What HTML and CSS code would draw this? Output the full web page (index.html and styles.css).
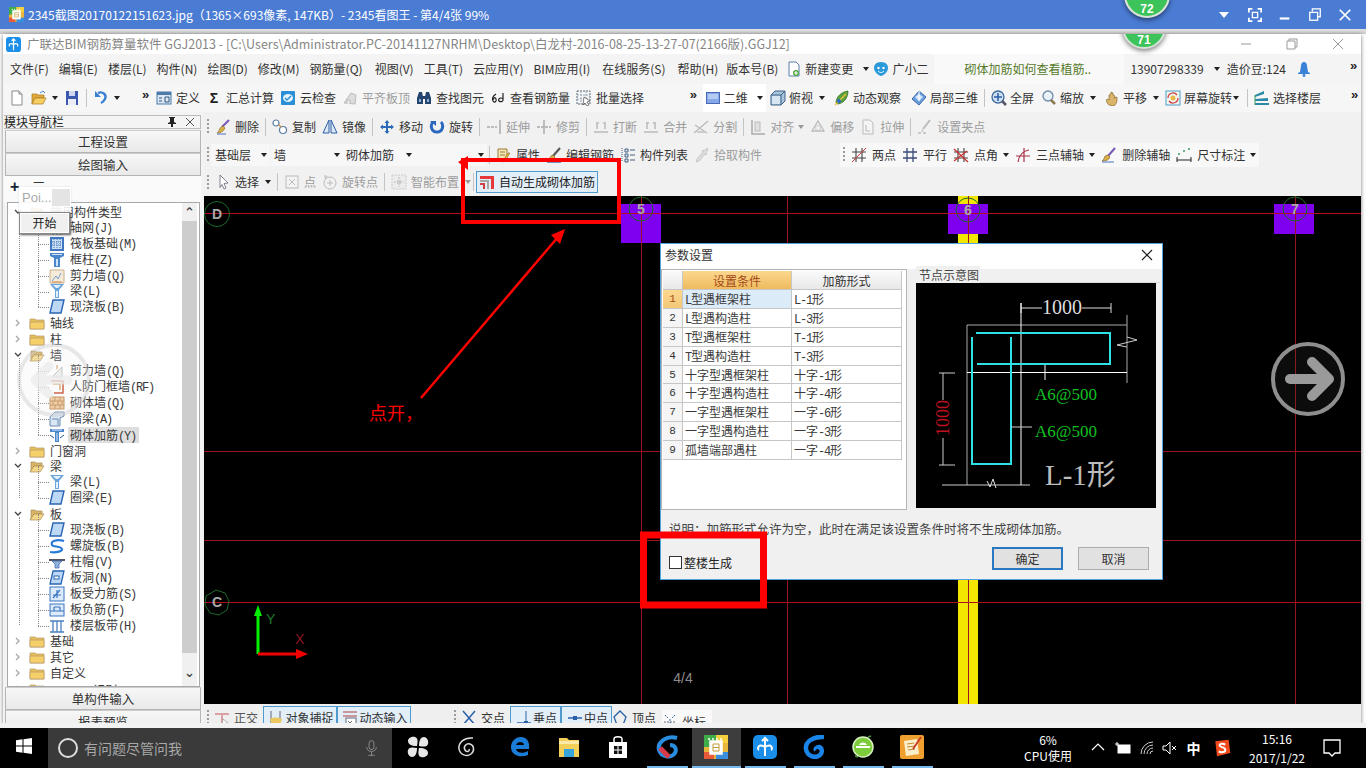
FILE: index.html
```html
<!DOCTYPE html>
<html lang="zh-CN">
<head>
<meta charset="utf-8">
<title>2345看图王</title>
<link rel="stylesheet" href="styles.css">
</head>
<body>
<svg class="sprite" xmlns="http://www.w3.org/2000/svg">
<symbol id="doc" viewBox="0 0 16 16"><path d="M3 1h7l3 3v11H3z" fill="#fff" stroke="#8a8a8a"/><path d="M10 1v3h3" fill="#ddd" stroke="#8a8a8a"/></symbol>
<symbol id="open" viewBox="0 0 16 16"><path d="M1 4h5l1 1h6v3H4l-3 6z" fill="#e0a93a" stroke="#a87a20" stroke-width=".7"/><path d="M1 14l3-6h11l-3 6z" fill="#f6cd63" stroke="#a87a20" stroke-width=".7"/><path d="M9 3l3-2 2 2" fill="none" stroke="#4a8ad0"/></symbol>
<symbol id="save" viewBox="0 0 16 16"><rect x="2" y="1" width="12" height="14" fill="#3b58b0"/><rect x="5" y="1" width="6" height="5" fill="#cfd9ee"/><rect x="4" y="9" width="8" height="6" fill="#e8edf6"/></symbol>
<symbol id="undo" viewBox="0 0 16 16"><path d="M5 3c5-2 9 2 7 6-1 2-2 3-4 4" fill="none" stroke="#3a80d2" stroke-width="2.4"/><path d="M2 1v6h6z" fill="#3a80d2"/></symbol>
<symbol id="def" viewBox="0 0 16 16"><rect x="1" y="2" width="14" height="12" fill="#dbe7f2" stroke="#4b7aa8"/><rect x="1" y="2" width="14" height="3" fill="#4b7aa8"/><path d="M3 8h3M3 11h3M9 7h4v5H9z" stroke="#33567c" fill="none"/></symbol>
<symbol id="cloud" viewBox="0 0 16 16"><rect x="1" y="1" width="14" height="14" rx="1" fill="#2b8fd8"/><ellipse cx="8" cy="8" rx="5" ry="4" fill="#e6f3fc"/><path d="M5 8l2 2 4-4" fill="none" stroke="#2b8fd8" stroke-width="1.5"/></symbol>
<symbol id="flat" viewBox="0 0 16 16"><path d="M2 13L9 3l5 2-1 9z" fill="#ddd" stroke="#bbb"/><path d="M5 14v-4h3v4" fill="#eee" stroke="#bbb"/></symbol>
<symbol id="find" viewBox="0 0 16 16"><path d="M3 2h3l1 5v7H1V8zM10 2h3l2 6v6H9V7z" fill="#24456e"/><rect x="6" y="6" width="4" height="3" fill="#24456e"/><rect x="3" y="9" width="2" height="3" fill="#8fb2d6"/><rect x="11" y="9" width="2" height="3" fill="#8fb2d6"/></symbol>
<symbol id="rebar" viewBox="0 0 16 16"><path d="M6 4C3 6 2 9 3 11s4 1 3-2-3 0-3 1M13 3v7c0 2-3 2-4 1s0-3 2-3 2 1 2 1" fill="none" stroke="#222" stroke-width="1.2"/></symbol>
<symbol id="batch" viewBox="0 0 16 16"><rect x="1" y="1" width="13" height="13" fill="none" stroke="#567" stroke-dasharray="2 1"/><path d="M1 5h13M1 9h13M5 1v13M10 1v13" stroke="#9ab" stroke-dasharray="2 1"/><path d="M8 7l6 4-3 1 2 3-2 1-2-3-2 2z" fill="#fff" stroke="#333" stroke-width=".6"/></symbol>
<symbol id="two" viewBox="0 0 16 16"><rect x="1.500" y="2.500" width="13" height="11" fill="#86a8e8" stroke="#4a6ab8"/><rect x="3" y="4" width="10" height="5" fill="#b4cbf2"/></symbol>
<symbol id="top" viewBox="0 0 16 16"><path d="M1 5l4-4h10v10l-4 4H1z" fill="#a9c5de" stroke="#3f6285"/><path d="M1 5h10v10M11 5l4-4" fill="none" stroke="#3f6285"/><rect x="2" y="6" width="8" height="8" fill="#d7e6f2"/></symbol>
<symbol id="orbit" viewBox="0 0 16 16"><path d="M2 13C2 7 7 2 14 1c0 7-4 12-10 13z" fill="#5aa13a" stroke="#2e6a1e" stroke-width=".7"/><path d="M1 15L12 4" stroke="#e8c23b" stroke-width="1.5"/><circle cx="5" cy="11" r="2" fill="#2b6ad0"/></symbol>
<symbol id="local" viewBox="0 0 16 16"><path d="M8 1l7 6-7 8-7-6z" fill="#6b9fdc" stroke="#3a6aa8"/><path d="M4 7l4-3 4 3-4 4z" fill="#d9e8f8"/><path d="M8 1v10" stroke="#fff"/></symbol>
<symbol id="full" viewBox="0 0 16 16"><circle cx="7" cy="7" r="6" fill="#cfe0f2" stroke="#3f6b9c" stroke-width="1.3"/><path d="M7 3v8M3 7h8" stroke="#2a5fa8" stroke-width="1.500"/><path d="M11 11l4 4" stroke="#556" stroke-width="2.500"/></symbol>
<symbol id="zoom" viewBox="0 0 16 16"><circle cx="7" cy="6" r="5" fill="#e8f0f8" stroke="#6f8aa6" stroke-width="1.300"/><path d="M10 10l4 4" stroke="#8a7a50" stroke-width="2.500"/><path d="M4 5a3 3 0 0 1 3-2" stroke="#fff" fill="none"/></symbol>
<symbol id="pan" viewBox="0 0 16 16"><path d="M5 15c-3-3-3-5-2-6l2 1V5l2-1V2l2 1v2l2 1-1 2 3-1v3c0 3-2 5-3 6z" fill="#d9b46a" stroke="#8a6a2a" stroke-width=".7"/></symbol>
<symbol id="rot" viewBox="0 0 16 16"><rect x="1" y="1" width="14" height="14" fill="#f2f6ee" stroke="#4aa0c8"/><path d="M3 8a5 5 0 0 1 9-3M13 8a5 5 0 0 1-9 3" fill="none" stroke="#d04040" stroke-width="1.300"/><circle cx="8" cy="8" r="2.500" fill="#e8b84a"/></symbol>
<symbol id="floor" viewBox="0 0 16 16"><path d="M1 5l9-4v3L1 7zM1 9l13-1v3H1zM1 13h14v2H1z" fill="#2a8aa6"/><path d="M1 5v10" stroke="#3a9a5a"/></symbol>
<symbol id="newch" viewBox="0 0 16 16"><path d="M3 1h7l3 3v11H3z" fill="#fff" stroke="#5a7fb0"/><circle cx="10" cy="12" r="3" fill="#4aa83a"/><path d="M8 12h4M10 10v4" stroke="#fff"/></symbol>
<symbol id="mascot" viewBox="0 0 16 16"><path d="M8 1c5 0 7 3 7 6s-3 7-7 8c-4-1-7-5-7-8s2-6 7-6z" fill="#2b9ad8"/><circle cx="5.500" cy="7" r="1.200" fill="#fff"/><circle cx="10.500" cy="7" r="1.200" fill="#fff"/><path d="M5 10c2 2 4 2 6 0" stroke="#fff" fill="none"/></symbol>
<symbol id="bell" viewBox="0 0 16 16"><path d="M8 1c2 0 3 2 3 4l1 6 2 1v1H2v-1l2-1 1-6c0-2 1-4 3-4z" fill="#3a82d8"/><circle cx="8" cy="14.500" r="1.400" fill="#3a82d8"/></symbol>
<symbol id="del" viewBox="0 0 16 16"><path d="M14 1L7 8" stroke="#7a5ab8" stroke-width="2.200"/><path d="M8 7l2 2c-1 3-4 5-8 5 2-1 2-3 3-5z" fill="#d8b04a" stroke="#8a6a2a" stroke-width=".6"/><path d="M2 15h9" stroke="#4a70c0"/></symbol>
<symbol id="copy" viewBox="0 0 16 16"><circle cx="4" cy="4" r="3" fill="#fff" stroke="#5a7aa0" stroke-width="1.200"/><circle cx="11" cy="11" r="3.500" fill="#fff" stroke="#5a7aa0" stroke-width="1.200"/><path d="M7 6l2 2" stroke="#e08a2a" stroke-width="1.300"/></symbol>
<symbol id="mirror" viewBox="0 0 16 16"><path d="M7 1L1 14h6zM9 1l6 13H9z" fill="#dbe8f6" stroke="#2d5ea8"/></symbol>
<symbol id="move" viewBox="0 0 16 16"><path d="M8 1l2.500 3H9v3h3V5.500L15 8l-3 2.500V9H9v3h1.500L8 15l-2.500-3H7V9H4v1.500L1 8l3-2.500V7h3V4H5.500z" fill="#2a6ab8"/></symbol>
<symbol id="rotate" viewBox="0 0 16 16"><path d="M4 3C1 6 2 13 8 13s7-7 4-10" fill="none" stroke="#2a68c0" stroke-width="3"/><path d="M1 2h6v5z" fill="#2a68c0"/></symbol>
<symbol id="extend" viewBox="0 0 16 16"><path d="M1 8h10" stroke="#bbb" stroke-width="2" stroke-dasharray="3 1"/><path d="M14 1v14" stroke="#aaa" stroke-width="1.500"/></symbol>
<symbol id="trim" viewBox="0 0 16 16"><path d="M1 8h14" stroke="#bbb" stroke-width="2" stroke-dasharray="3 1"/><path d="M8 1v14" stroke="#aaa" stroke-width="1.500"/></symbol>
<symbol id="brk" viewBox="0 0 16 16"><path d="M1 13h14M3 4h3M10 4h3M4 4v6M12 4v6" stroke="#bbb" stroke-width="1.500"/></symbol>
<symbol id="split" viewBox="0 0 16 16"><path d="M1 14L15 2M2 6l12 8" stroke="#bbb" stroke-width="1.400"/><path d="M4 12h8v2H4z" fill="#ccc"/></symbol>
<symbol id="align" viewBox="0 0 16 16"><path d="M2 1v14h13" fill="none" stroke="#aaa" stroke-width="1.500"/><rect x="5" y="3" width="5" height="9" fill="#e0e0e0" stroke="#bbb"/></symbol>
<symbol id="offset" viewBox="0 0 16 16"><path d="M8 2l6 10H2z" fill="none" stroke="#bbb" stroke-width="1.300"/><circle cx="8" cy="9" r="2.500" fill="none" stroke="#ccc"/></symbol>
<symbol id="stretch" viewBox="0 0 16 16"><path d="M3 1h7l3 3v11H3z" fill="#f4f4f4" stroke="#bbb"/><path d="M6 6v6h4" stroke="#bbb" fill="none"/></symbol>
<symbol id="gripset" viewBox="0 0 16 16"><path d="M13 1L6 10" stroke="#bbb" stroke-width="2"/><path d="M1 14h3M6 14h3" stroke="#bbb" stroke-width="1.500"/><path d="M5 10l2 2-3 1z" fill="#ccc"/></symbol>
<symbol id="prop" viewBox="0 0 16 16"><path d="M2 2h9v12H2z" fill="#f4e6b8" stroke="#9a7a30"/><path d="M4 5h5M4 8h5" stroke="#9a7a30"/><path d="M14 6l-5 8-2 1 1-3 4-6z" fill="#e6b84a" stroke="#8a6a2a" stroke-width=".6"/></symbol>
<symbol id="edit" viewBox="0 0 16 16"><path d="M14 1L7 9" stroke="#555" stroke-width="2"/><path d="M7 8l2 2c-1 2-3 3-7 3 2-1 2-3 3-4z" fill="#d8b04a" stroke="#7a5a20" stroke-width=".6"/><path d="M1 15h14" stroke="#2a5fa8" stroke-width="1.300"/></symbol>
<symbol id="list" viewBox="0 0 16 16"><path d="M5 2h3v3H5zM5 7h3v3H5zM5 12h3v3H5zM10 3h5M10 8h5M10 13h5" fill="#dfe8f2" stroke="#44607e"/><path d="M2 1v14" stroke="#44607e" stroke-dasharray="1 1"/></symbol>
<symbol id="pick" viewBox="0 0 16 16"><path d="M14 2l-1-1-3 3-1-1-1 1 1 1-6 7-1 3 3-1 6-7 1 1 1-1-1-1z" fill="#ddd" stroke="#bbb" stroke-width=".7"/></symbol>
<symbol id="p2" viewBox="0 0 16 16"><path d="M5 1v14M11 1v14M1 5h14M1 11h14" stroke="#444" stroke-width="1.100"/><path d="M1 15L15 1" stroke="#c83a3a"/></symbol>
<symbol id="par" viewBox="0 0 16 16"><path d="M5 1v14M11 1v14M1 5h14M1 11h14" stroke="#3a4a7a" stroke-width="1.300"/></symbol>
<symbol id="pang" viewBox="0 0 16 16"><path d="M5 1v14M11 1v14M1 5h14M1 11h14" stroke="#444" stroke-width="1.100"/><path d="M1 2l14 13M1 14L14 4" stroke="#d03030" stroke-width="1.200"/></symbol>
<symbol id="p3" viewBox="0 0 16 16"><path d="M3 15C4 8 8 4 14 3M9 1v14M1 9h14" fill="none" stroke="#a83048" stroke-width="1.200"/></symbol>
<symbol id="deax" viewBox="0 0 16 16"><path d="M14 1L7 9" stroke="#7a5ab8" stroke-width="2"/><path d="M7 8l2 2c-1 3-4 4-8 4 2-1 2-3 3-5z" fill="#d8b04a" stroke="#7a5a20" stroke-width=".6"/><path d="M1 15h12" stroke="#4a70c0"/></symbol>
<symbol id="dim" viewBox="0 0 16 16"><path d="M1 10v5M15 10v5M1 13h14" stroke="#222"/><path d="M2 7h2M7 4h2M12 2h2" stroke="#3a9a5a" stroke-width="1.500"/></symbol>
<symbol id="cursor" viewBox="0 0 16 16"><path d="M5 1l8 8-4 .5 2 4.500-2 1-2-4.500-2 3z" fill="#fff" stroke="#667" stroke-width=".8"/></symbol>
<symbol id="pt" viewBox="0 0 16 16"><rect x="2" y="2" width="12" height="12" fill="#f3f3f3" stroke="#bbb"/><path d="M5 5l6 6M11 5l-6 6" stroke="#bbb"/></symbol>
<symbol id="rotpt" viewBox="0 0 16 16"><circle cx="8" cy="9" r="6" fill="none" stroke="#bbb"/><path d="M8 6v6M5 9h6" stroke="#bbb"/><path d="M2 1l1 5 3-4z" fill="#ccc"/></symbol>
<symbol id="smart" viewBox="0 0 16 16"><rect x="1" y="1" width="14" height="14" fill="#ececec" stroke="#ccc" stroke-dasharray="2 1"/><path d="M8 3v10M3 8h10" stroke="#bbb" stroke-dasharray="2 1"/><rect x="6" y="6" width="4" height="4" fill="#ccc"/></symbol>
<symbol id="auto" viewBox="0 0 16 16"><path d="M1 2h14v13h-3V5H1z" fill="#e63a3a"/><path d="M1 6h9v9H8V8H1z" fill="#a8a8a8"/><path d="M1 9h5v6H4v-4H1z" fill="#d04040"/></symbol>
<symbol id="ortho" viewBox="0 0 16 16"><path d="M1 4h14M8 4v10" stroke="#d8a0a0" stroke-width="2"/><path d="M9 9l5 4-3 .5 1 2-1 .500-1-2-2 1z" fill="#fff" stroke="#888" stroke-width=".6"/></symbol>
<symbol id="snap" viewBox="0 0 16 16"><path d="M3 1v14M12 1v8" stroke="#667"/><path d="M2 9c3-2 8-2 12 0l-2 6H4z" fill="#ecc860"/></symbol>
<symbol id="dyn" viewBox="0 0 16 16"><path d="M1 2h14M1 6h14" stroke="#b04040"/><rect x="4" y="8" width="10" height="7" fill="#fff" stroke="#667"/><path d="M6 11l2 2 2-2" fill="none" stroke="#667"/></symbol>
<symbol id="cross" viewBox="0 0 16 16"><path d="M2 1l12 14M14 1L2 15" stroke="#2a60a8" stroke-width="1.500"/></symbol>
<symbol id="perp" viewBox="0 0 16 16"><path d="M1 13h14" stroke="#2a60a8" stroke-width="1.500"/><path d="M10 1v12" stroke="#2a60a8"/><rect x="8" y="11" width="4" height="4" fill="#2a60a8"/></symbol>
<symbol id="mid" viewBox="0 0 16 16"><path d="M1 8h14" stroke="#2a60a8" stroke-width="1.500"/><rect x="6" y="6" width="4" height="4" fill="#2a60a8"/></symbol>
<symbol id="vtx" viewBox="0 0 16 16"><path d="M8 1l6 6-3 8H5L2 7z" fill="none" stroke="#2a60a8" stroke-width="1.300"/></symbol>
<symbol id="coord" viewBox="0 0 16 16"><path d="M3 1l3 3M13 1l-3 3M8 5v10" stroke="#2a60a8" stroke-dasharray="2 1"/><path d="M2 8h12" stroke="#667" stroke-dasharray="2 1"/></symbol>
<symbol id="chev" viewBox="0 0 8 8"><path d="M2 1l3 3-3 3" fill="none" stroke="#a8a8a8" stroke-width="1.300"/></symbol>
<symbol id="chevd" viewBox="0 0 8 8"><path d="M1 2l3 3 3-3" fill="none" stroke="#444" stroke-width="1.300"/></symbol>
<symbol id="fold" viewBox="0 0 16 16"><path d="M1 4h5l1 1h8v9H1z" fill="#e8c058" stroke="#b59a6a" stroke-width=".7"/><path d="M1 7h14v7H1z" fill="#f4cf6a" stroke="#b59a6a" stroke-width=".7"/></symbol>
<symbol id="foldo" viewBox="0 0 16 16"><path d="M2 4h4l1 1h6v3H5l-3 6z" fill="#d9b56a" stroke="#a88a50" stroke-width=".7"/><path d="M1 14l4-6h10l-4 6z" fill="#f4d78a" stroke="#a88a50" stroke-width=".7"/></symbol>
<symbol id="grid" viewBox="0 0 16 16"><path d="M1 4h14M1 8h14M1 12h14M4 1v14M8 1v14M12 1v14" stroke="#2a5fa8"/></symbol>
<symbol id="raft" viewBox="0 0 16 16"><rect x="1" y="1" width="14" height="14" fill="#3f78c0"/><rect x="3" y="3" width="10" height="10" fill="#cfe0f4"/><path d="M5 3v10M8 3v10M11 3v10M3 6h10M3 9h10" stroke="#3f78c0" stroke-dasharray="1 1"/></symbol>
<symbol id="col" viewBox="0 0 16 16"><path d="M1 1h14v3l-4 2v9H5V6L1 4z" fill="#4a86cc"/><path d="M3 2h10v1H3zM7 7h2v7H7z" fill="#cfe2f6"/></symbol>
<symbol id="wall" viewBox="0 0 16 16"><path d="M1 2h14v13H1z" fill="#f7ead8" stroke="#c8b090"/><path d="M3 13l4-5 2 3 3-6" stroke="#6f9fd0" fill="none"/><path d="M3 14h10" stroke="#d08a4a"/></symbol>
<symbol id="beam" viewBox="0 0 16 16"><path d="M1 1h14L10 7v8H6V7z" fill="#6aa4dc"/><path d="M4 2h8L9 5H7zM7 8h2v6H7z" fill="#e2f0fc"/></symbol>
<symbol id="slab" viewBox="0 0 16 16"><path d="M4 1h11l-3 13H1z" fill="#bcd8f4" stroke="#2a64b4" stroke-width="1.400"/></symbol>
<symbol id="sw" viewBox="0 0 16 16"><path d="M3 14L13 4v10z" fill="#eee" stroke="#aaa" stroke-width=".7"/><path d="M8 2v4" stroke="#d08a4a"/></symbol>
<symbol id="frame" viewBox="0 0 16 16"><path d="M2 2h12v12H5" fill="none" stroke="#c84a2a" stroke-width="1.500"/><path d="M4 5h7v6" fill="none" stroke="#d8a070" stroke-width="1.500"/></symbol>
<symbol id="brick" viewBox="0 0 16 16"><rect x="1" y="2" width="14" height="12" fill="#f0c89a" stroke="#c08a50"/><path d="M1 6h14M1 10h14M6 2v4M11 2v4M4 6v4M9 6v4M13 6v4M6 10v4M11 10v4" stroke="#c08a50"/></symbol>
<symbol id="dbeam" viewBox="0 0 16 16"><path d="M6 1h9v4l-4 2v8H1V6z" fill="#dbe7f4" stroke="#6a8ab0"/><path d="M3 8h6v6" stroke="#6a8ab0" fill="none"/></symbol>
<symbol id="mas" viewBox="0 0 16 16"><path d="M1 2h14v3H10v10H6V5H1z" fill="#4a86cc"/><path d="M3 3h10M8 6v8" stroke="#dbeaf8"/><path d="M1 8l4 3M15 8l-4 3" stroke="#2a5fa8"/></symbol>
<symbol id="spiral" viewBox="0 0 16 16"><path d="M15 3C8 1 1 3 3 7c1 2 9 1 10 4 1 2-5 4-12 3" fill="none" stroke="#2a7ad8" stroke-width="2.200"/></symbol>
<symbol id="cap" viewBox="0 0 16 16"><path d="M0 5h16v2H0z" fill="#556"/><path d="M3 7h10l-3 3v4H6v-4z" fill="#8fb2dc" stroke="#3a68a8" stroke-width=".7"/></symbol>
<symbol id="hole" viewBox="0 0 16 16"><path d="M4 1h11l-3 13H1z" fill="#bcd8f4" stroke="#2a64b4" stroke-width="1.300"/><rect x="5" y="6" width="5" height="3" fill="#fff" stroke="#2a64b4"/></symbol>
<symbol id="sbar" viewBox="0 0 16 16"><rect x="1" y="1" width="14" height="14" fill="#dceafa" stroke="#3a74c0"/><path d="M4 12l7-8M8 4v8M4 9h8" stroke="#3a74c0" stroke-width="1.200"/></symbol>
<symbol id="nbar" viewBox="0 0 16 16"><rect x="1" y="2" width="14" height="12" fill="#dceafa" stroke="#3a74c0"/><path d="M1 9h14M5 5v4M11 5v4M5 5h6" stroke="#3a74c0" fill="none" stroke-width="1.200"/></symbol>
<symbol id="band" viewBox="0 0 16 16"><path d="M1 3h14M1 14h14M4 3v11M8 3v11M12 3v11" stroke="#4a80c0" stroke-width="1.300"/></symbol>
<symbol id="win" viewBox="0 0 16 16"><path d="M0 2.200L6.500 1.300v6.200H0zM7.500 1.200L16 0v7.500H7.500zM0 8.500h6.500v6.200L0 13.800zM7.500 8.500H16V16l-8.500-1.200z" fill="#fff"/></symbol>
<symbol id="fan" viewBox="0 0 24 24"><path d="M11 11C5 11 2 9 2 6s4-5 7-4 3 4 2 9zM13 11c0-6 2-9 5-9s5 4 4 7-4 3-9 2zM13 13c6 0 9 2 9 5s-4 5-7 4-3-4-2-9zM11 13c0 6-2 9-5 9s-5-4-4-7 4-3 9-2z" fill="#e8e8e8"/></symbol>
<symbol id="swirl" viewBox="0 0 24 24"><path d="M18 3C9 2 3 8 4 14s8 8 12 5 3-9-1-10-7 3-5 6 5 1 4-1" fill="none" stroke="#dcdcdc" stroke-width="1.500"/></symbol>
<symbol id="edge" viewBox="0 0 24 24"><path d="M21 14H8c.5 4 7 5 12 2v4c-7 3-17 1-17-8C3 5 9 2 13 2c6 0 9 5 8 12zM8 10h8c0-4-7-4-8 0z" fill="#1a7ed8"/></symbol>
<symbol id="explorer" viewBox="0 0 24 24"><path d="M2 3h8l2 2h10v17H2z" fill="#f4cf5a"/><path d="M2 6h20v3H2z" fill="#fbe9a8"/><path d="M7 14h10v8H7z" fill="#38a4dc"/></symbol>
<symbol id="store" viewBox="0 0 24 24"><path d="M3 7h18v16H3z" fill="#fff"/><path d="M8 7V4c0-3 8-3 8 0v3" fill="none" stroke="#fff" stroke-width="1.500"/><path d="M8 11h3.500v3.500H8zM12.500 11H16v3.500h-3.500zM8 15.500h3.500V19H8zM12.500 15.500H16V19h-3.500z" fill="#111"/></symbol>
<symbol id="gred" viewBox="0 0 24 24"><path d="M22 3C12 0 2 7 4 15c2 7 12 9 16 3 2-4 0-8-5-8" fill="none" stroke="#2a8ee0" stroke-width="4"/><path d="M5 13l9 9" stroke="#d83a4a" stroke-width="5"/></symbol>
<symbol id="viewer" viewBox="0 0 24 24"><rect width="24" height="24" rx="2" fill="#e8b63a"/><rect width="12" height="12" fill="#3fae4a"/><rect x="12" width="12" height="8" fill="#f4d03f"/><rect y="17" width="10" height="7" fill="#e85a3a"/><rect x="12" y="17" width="12" height="7" fill="#3a8ee0"/><path d="M5 3v2M9 3v2M13 3v2M17 3v2M6 6h12v13H6z" fill="#fff" stroke="#fff" stroke-width="1.500"/><path d="M9 9h6v7H9zM9 12.500h6" fill="none" stroke="#c89a3a"/></symbol>
<symbol id="gld" viewBox="0 0 24 24"><rect width="24" height="24" rx="5" fill="#1a8ee8"/><path d="M12 3v18M12 12c-7-4-8 2-6 3M12 12c7-4 8 2 6 3M9 6l3-3 3 3" fill="none" stroke="#fff" stroke-width="2"/></symbol>
<symbol id="gblue" viewBox="0 0 24 24"><path d="M22 2C11 1 3 7 4 14s9 10 14 6c3-3 2-7-1-8-2 0-4 2-3 3" fill="none" stroke="#1a84e8" stroke-width="4.500"/></symbol>
<symbol id="gcircle" viewBox="0 0 24 24"><circle cx="12" cy="12" r="10" fill="#7ccb3a" stroke="#d8f0c0" stroke-width="1.500"/><path d="M5 12h14" stroke="#fff" stroke-width="2"/><path d="M8 10a4.500 4.500 0 0 1 8 0z" fill="#fff"/><path d="M17 2l3-1M4 21l3 1" stroke="#4a9a3a" stroke-width="1.500"/></symbol>
<symbol id="note" viewBox="0 0 24 24"><rect width="24" height="24" rx="2" fill="#f0a030"/><path d="M4 6l13-2 2 15-13 2z" fill="#fbeeca"/><path d="M7 9l7-1M7 12l8-1M8 15l7-1" stroke="#c08a3a"/><path d="M21 2L13 14" stroke="#c83a2a" stroke-width="1.800"/></symbol>
<symbol id="sogou" viewBox="0 0 24 24"><path d="M4 4l16-2 2 16-16 4z" fill="#f04a1a"/><path d="M16 8c-3-2-7-1-7 1s7 2 7 5-5 4-8 2" fill="none" stroke="#fff" stroke-width="2.400"/></symbol>
</svg>

<div class="screen">
  <header class="viewer-bar">
    <svg class="viewer-logo"><use href="#viewer"/></svg>
    <span class="viewer-name">2345截图20170122151623.jpg（1365×693像素, 147KB）- 2345看图王 - 第4/4张 99%</span>
    <div class="viewer-ctrls">
      <span class="vc-drop"></span>
      <svg class="vc" viewBox="0 0 16 16"><path d="M1 5V1h4M11 1h4v4M15 11v4h-4M5 15H1v-4" fill="none" stroke="#fff" stroke-width="2"/><rect x="5" y="5" width="6" height="6" fill="none" stroke="#fff" stroke-width="1.500"/></svg>
      <svg class="vc" viewBox="0 0 16 16"><path d="M2 12h11" stroke="#fff" stroke-width="2.500"/></svg>
      <svg class="vc" viewBox="0 0 16 16"><path d="M5 4V1h9v9h-3" fill="none" stroke="#fff" stroke-width="1.500"/><rect x="2" y="5" width="9" height="9" fill="none" stroke="#fff" stroke-width="1.500"/></svg>
      <svg class="vc" viewBox="0 0 16 16"><path d="M2 2l12 12M14 2L2 14" stroke="#fff" stroke-width="2"/></svg>
    </div>
  </header>
  <div class="viewer-strip"></div>

  <main class="app">
    <div class="app-title">
      <svg class="app-logo"><use href="#gld"/></svg>
      <span class="app-name">广联达BIM钢筋算量软件 GGJ2013 - [C:\Users\Administrator.PC-20141127NRHM\Desktop\白龙村-2016-08-25-13-27-07(2166版).GGJ12]</span>
      <div class="app-ctrls">
        <svg class="ac" viewBox="0 0 12 12"><path d="M1 6h10" stroke="#999"/></svg>
        <svg class="ac" viewBox="0 0 12 12"><path d="M3 3V1h8v8H9M1 3h8v8H1z" fill="none" stroke="#999"/></svg>
        <svg class="ac" viewBox="0 0 12 12"><path d="M1 1l10 10M11 1L1 11" stroke="#999"/></svg>
      </div>
    </div>

    <nav class="menu">
      <span>文件(F)</span><span>编辑(E)</span><span>楼层(L)</span><span>构件(N)</span><span>绘图(D)</span><span>修改(M)</span><span>钢筋量(Q)</span><span class="m2">视图(V)</span><span>工具(T)</span><span>云应用(Y)</span><span>BIM应用(I)</span><span class="m2">在线服务(S)</span><span class="m2">帮助(H)</span><span class="menu-ver">版本号(B)</span>
      <span class="it"><svg class="ic"><use href="#newch"/></svg>新建变更</span><i class="dd"></i>
      <span class="it gxe"><svg class="ic"><use href="#mascot"/></svg>广小二</span>
      <span class="menu-ask">砌体加筋如何查看植筋..</span>
      <span>13907298339</span><i class="dd"></i><span class="cost">造价豆:124</span>
      <svg class="ic"><use href="#bell"/></svg>
      <span class="more more-menu">»</span>
    </nav>

    <div class="tb tb1">
      <div class="seg seg-a">
        <svg class="ic"><use href="#doc"/></svg>
        <span class="pair"><svg class="ic"><use href="#open"/></svg><i class="dd"></i></span>
        <svg class="ic"><use href="#save"/></svg>
        <i class="sep"></i>
        <span class="pair"><svg class="ic"><use href="#undo"/></svg><i class="dd"></i></span>
        <span class="more more-a">»</span>
        <span class="it"><svg class="ic"><use href="#def"/></svg>定义</span>
        <span class="it"><b class="sigma">Σ</b>汇总计算</span>
        <span class="it"><svg class="ic"><use href="#cloud"/></svg>云检查</span>
        <span class="it off"><svg class="ic"><use href="#flat"/></svg>平齐板顶</span>
        <span class="it"><svg class="ic"><use href="#find"/></svg>查找图元</span>
        <span class="it"><svg class="ic"><use href="#rebar"/></svg>查看钢筋量</span>
        <span class="it"><svg class="ic"><use href="#batch"/></svg>批量选择</span>
      </div>
      <span class="more">»</span>
      <div class="seg seg-b">
        <span class="it hot"><svg class="ic"><use href="#two"/></svg>二维<i class="dd"></i></span>
        <span class="it"><svg class="ic"><use href="#top"/></svg>俯视</span><i class="dd"></i>
        <span class="it orbit-it"><svg class="ic"><use href="#orbit"/></svg>动态观察</span>
        <span class="it local-it"><svg class="ic"><use href="#local"/></svg>局部三维</span>
        <i class="sep sep-a"></i>
        <span class="it"><svg class="ic"><use href="#full"/></svg>全屏</span>
        <span class="it zoom-it"><svg class="ic"><use href="#zoom"/></svg>缩放</span><i class="dd"></i>
        <span class="it pan-it"><svg class="ic"><use href="#pan"/></svg>平移</span><i class="dd"></i>
        <span class="it"><svg class="ic"><use href="#rot"/></svg>屏幕旋转</span><i class="dd tight"></i>
        <i class="sep"></i>
        <span class="it"><svg class="ic"><use href="#floor"/></svg>选择楼层</span>
      </div>
      <span class="more more-end">»</span>
    </div>

    <div class="workspace">
      <aside class="nav">
        <div class="nav-head"><span>模块导航栏</span><svg class="nav-pin" viewBox="0 0 12 12"><path d="M3 1h6v1H8v4l2 1v1H7v3H5V8H2V7l2-1V2H3z" fill="#222"/></svg><svg class="nav-x" viewBox="0 0 12 12"><path d="M2 2l8 8M10 2l-8 8" stroke="#555"/></svg></div>
        <div class="nav-btn">工程设置</div>
        <div class="nav-btn">绘图输入</div>
        <div class="nav-tools"><span class="plus">+</span><span class="minus">一</span></div>
        <div class="tree-box">
          <div class="tree">
            <div class="node"><svg class="chv"><use href="#chevd"/></svg><svg class="ic"><use href="#foldo"/></svg><span>常用构件类型</span></div>
            <div class="kids">
              <div class="node kid"><svg class="ic"><use href="#grid"/></svg><span>轴网<u>(J)</u></span></div>
              <div class="node kid"><svg class="ic"><use href="#raft"/></svg><span>筏板基础<u>(M)</u></span></div>
              <div class="node kid"><svg class="ic"><use href="#col"/></svg><span>框柱<u>(Z)</u></span></div>
              <div class="node kid"><svg class="ic"><use href="#wall"/></svg><span>剪力墙<u>(Q)</u></span></div>
              <div class="node kid"><svg class="ic"><use href="#beam"/></svg><span>梁<u>(L)</u></span></div>
              <div class="node kid"><svg class="ic"><use href="#slab"/></svg><span>现浇板<u>(B)</u></span></div>
            </div>
            <div class="node"><svg class="chv"><use href="#chev"/></svg><svg class="ic"><use href="#fold"/></svg><span>轴线</span></div>
            <div class="node"><svg class="chv"><use href="#chev"/></svg><svg class="ic"><use href="#fold"/></svg><span>柱</span></div>
            <div class="node"><svg class="chv"><use href="#chevd"/></svg><svg class="ic"><use href="#foldo"/></svg><span>墙</span></div>
            <div class="kids">
              <div class="node kid"><svg class="ic"><use href="#sw"/></svg><span>剪力墙<u>(Q)</u></span></div>
              <div class="node kid"><svg class="ic"><use href="#frame"/></svg><span>人防门框墙<u>(RF)</u></span></div>
              <div class="node kid"><svg class="ic"><use href="#brick"/></svg><span>砌体墙<u>(Q)</u></span></div>
              <div class="node kid"><svg class="ic"><use href="#dbeam"/></svg><span>暗梁<u>(A)</u></span></div>
              <div class="node kid sel"><svg class="ic"><use href="#mas"/></svg><span>砌体加筋<u>(Y)</u></span></div>
            </div>
            <div class="node"><svg class="chv"><use href="#chev"/></svg><svg class="ic"><use href="#fold"/></svg><span>门窗洞</span></div>
            <div class="node"><svg class="chv"><use href="#chevd"/></svg><svg class="ic"><use href="#foldo"/></svg><span>梁</span></div>
            <div class="kids">
              <div class="node kid"><svg class="ic"><use href="#beam"/></svg><span>梁<u>(L)</u></span></div>
              <div class="node kid"><svg class="ic"><use href="#slab"/></svg><span>圈梁<u>(E)</u></span></div>
            </div>
            <div class="node"><svg class="chv"><use href="#chevd"/></svg><svg class="ic"><use href="#foldo"/></svg><span>板</span></div>
            <div class="kids">
              <div class="node kid"><svg class="ic"><use href="#slab"/></svg><span>现浇板<u>(B)</u></span></div>
              <div class="node kid"><svg class="ic"><use href="#spiral"/></svg><span>螺旋板<u>(B)</u></span></div>
              <div class="node kid"><svg class="ic"><use href="#cap"/></svg><span>柱帽<u>(V)</u></span></div>
              <div class="node kid"><svg class="ic"><use href="#hole"/></svg><span>板洞<u>(N)</u></span></div>
              <div class="node kid"><svg class="ic"><use href="#sbar"/></svg><span>板受力筋<u>(S)</u></span></div>
              <div class="node kid"><svg class="ic"><use href="#nbar"/></svg><span>板负筋<u>(F)</u></span></div>
              <div class="node kid"><svg class="ic"><use href="#band"/></svg><span>楼层板带<u>(H)</u></span></div>
            </div>
            <div class="node"><svg class="chv"><use href="#chev"/></svg><svg class="ic"><use href="#fold"/></svg><span>基础</span></div>
            <div class="node"><svg class="chv"><use href="#chev"/></svg><svg class="ic"><use href="#fold"/></svg><span>其它</span></div>
            <div class="node"><svg class="chv"><use href="#chev"/></svg><svg class="ic"><use href="#fold"/></svg><span>自定义</span></div>
            <div class="node"><svg class="chv"><use href="#chev"/></svg><svg class="ic"><use href="#fold"/></svg><span class="clip-row">CAD识别<em class="new">New</em></span></div>
          </div>
          <div class="vscroll"><span class="vs-btn">⌃</span><span class="vs-thumb"></span><span class="vs-track"></span><span class="vs-btn down">⌄</span></div>
        </div>
        <div class="nav-btn">单构件输入</div>
        <div class="nav-btn">报表预览</div>
      </aside>

      <section class="work">
        <div class="tb tb2">
          <i class="grip"></i>
          <span class="it"><svg class="ic"><use href="#del"/></svg>删除</span><i class="sep"></i>
          <span class="it"><svg class="ic"><use href="#copy"/></svg>复制</span>
          <span class="it"><svg class="ic"><use href="#mirror"/></svg>镜像</span><i class="sep"></i>
          <span class="it"><svg class="ic"><use href="#move"/></svg>移动</span>
          <span class="it"><svg class="ic"><use href="#rotate"/></svg>旋转</span><i class="sep"></i>
          <span class="it off"><svg class="ic"><use href="#extend"/></svg>延伸</span>
          <span class="it off"><svg class="ic"><use href="#trim"/></svg>修剪</span><i class="sep"></i>
          <span class="it off"><svg class="ic"><use href="#brk"/></svg>打断</span>
          <span class="it off"><svg class="ic"><use href="#brk"/></svg>合并</span>
          <span class="it off"><svg class="ic"><use href="#split"/></svg>分割</span><i class="sep"></i>
          <span class="it off"><svg class="ic"><use href="#align"/></svg>对齐<i class="dd soft"></i></span>
          <span class="it off"><svg class="ic"><use href="#offset"/></svg>偏移</span>
          <span class="it off"><svg class="ic"><use href="#stretch"/></svg>拉伸</span><i class="sep"></i>
          <span class="it off"><svg class="ic"><use href="#gripset"/></svg>设置夹点</span>
        </div>
        <div class="tb tb3">
          <i class="grip"></i>
          <span class="combo c1">基础层<i class="dd"></i></span>
          <span class="combo">墙<i class="dd"></i></span>
          <span class="combo">砌体加筋<i class="dd"></i></span>
          <span class="combo"><i class="dd"></i></span>
          <i class="sep"></i>
          <span class="it"><svg class="ic"><use href="#prop"/></svg>属性</span>
          <span class="it"><svg class="ic"><use href="#edit"/></svg>编辑钢筋</span>
          <span class="it"><svg class="ic"><use href="#list"/></svg>构件列表</span>
          <span class="it off"><svg class="ic"><use href="#pick"/></svg>拾取构件</span>
          <div class="axis-group">
            <i class="grip"></i>
            <span class="it"><svg class="ic"><use href="#p2"/></svg>两点</span>
            <span class="it"><svg class="ic"><use href="#par"/></svg>平行</span>
            <span class="it"><svg class="ic"><use href="#pang"/></svg>点角</span><i class="dd"></i>
            <span class="it"><svg class="ic"><use href="#p3"/></svg>三点辅轴</span><i class="dd"></i>
            <span class="it"><svg class="ic"><use href="#deax"/></svg>删除辅轴</span>
            <span class="it"><svg class="ic"><use href="#dim"/></svg>尺寸标注</span><i class="dd"></i>
          </div>
        </div>
        <div class="tb tb4">
          <i class="grip"></i>
          <span class="it"><svg class="ic"><use href="#cursor"/></svg>选择</span><i class="dd"></i><i class="sep"></i>
          <span class="it off"><svg class="ic"><use href="#pt"/></svg>点</span>
          <span class="it off"><svg class="ic"><use href="#rotpt"/></svg>旋转点</span><i class="sep"></i>
          <span class="it off"><svg class="ic"><use href="#smart"/></svg>智能布置</span><i class="dd soft"></i><i class="sep sep-tight"></i>
          <span class="it on auto-btn"><svg class="ic"><use href="#auto"/></svg>自动生成砌体加筋</span>
        </div>

        <div class="canvas">
          <svg class="cad" viewBox="0 0 1158 508" xmlns="http://www.w3.org/2000/svg">
            <rect x="754" width="20" height="508" fill="#f2e600"/>
            <rect x="417" y="8" width="40" height="39" fill="#7f00f0"/>
            <rect x="744" y="8" width="40" height="30" fill="#7f00f0"/>
            <rect x="1070" y="8" width="40" height="30" fill="#7f00f0"/>
            <g stroke="#9a1420" stroke-width="1">
              <path d="M0 17.500H1158" stroke="#b0101c"/>
              <path d="M0 255.500H1158M0 344.500H1158"/>
              <path d="M0 406.500H1158" stroke="#b0101c"/>
              <path d="M437.500 0V508M583.500 0V508M764.500 0V508M1091.500 0V508"/>
            </g>
            <g fill="none" stroke="#1d6a2a">
              <circle cx="13" cy="18" r="12.500"/>
              <circle cx="437" cy="13" r="12"/>
              <circle cx="764" cy="14" r="12"/>
              <circle cx="1091" cy="13" r="12"/>
              <path d="M12 394l9 3 4 8-2 9-8 5-9-2-5-8 1-9z"/>
            </g>
            <g class="cad-label">
              <text x="13" y="23">D</text>
              <text x="437" y="18">5</text>
              <text x="764" y="19">6</text>
              <text x="1091" y="18">7</text>
              <text x="13" y="411">C</text>
            </g>
            <path d="M54 458V420" stroke="#00f000" stroke-width="3"/><path d="M54 409l4 11h-8z" fill="#00f000"/>
            <path d="M54 458H93" stroke="#f00000" stroke-width="3"/><path d="M104 458l-12-5v10z" fill="#f00000"/>
            <text class="axis-y" x="62" y="428">Y</text>
            <text class="axis-x" x="91" y="448">X</text>
            <text class="page-no" x="479" y="487">4/4</text>
          </svg>
        </div>

        <div class="tb status">
          <i class="grip"></i>
          <span class="it off2"><svg class="ic"><use href="#ortho"/></svg>正交</span>
          <span class="it on st-a"><svg class="ic"><use href="#snap"/></svg>对象捕捉</span>
          <span class="it on st-a"><svg class="ic"><use href="#dyn"/></svg>动态输入</span>
          <i class="grip grip-st"></i>
          <span class="it"><svg class="ic"><use href="#cross"/></svg>交点</span>
          <span class="it on st-b"><svg class="ic"><use href="#perp"/></svg>垂点</span>
          <span class="it on st-b"><svg class="ic"><use href="#mid"/></svg>中点</span>
          <span class="it"><svg class="ic"><use href="#vtx"/></svg>顶点</span>
          <span class="it st-last"><svg class="ic"><use href="#coord"/></svg>坐标</span>
        </div>
      </section>
    </div>
  </main>

  <div class="viewer-gap"></div>

  <footer class="taskbar">
    <div class="start"><svg class="win"><use href="#win"/></svg></div>
    <div class="search"><span class="ring"></span><span class="search-text">有问题尽管问我</span>
      <svg class="mic" viewBox="0 0 16 20"><rect x="5" y="1" width="6" height="11" rx="3" fill="none" stroke="#999"/><path d="M2 9c0 7 12 7 12 0M8 15v4M4 19h8" fill="none" stroke="#999"/></svg>
    </div>
    <div class="apps">
      <span class="app-slot"><svg class="ti"><use href="#fan"/></svg></span>
      <span class="app-slot"><svg class="ti"><use href="#swirl"/></svg></span>
      <span class="app-slot shift"><svg class="ti"><use href="#edge"/></svg></span>
      <span class="app-slot"><svg class="ti"><use href="#explorer"/></svg></span>
      <span class="app-slot"><svg class="ti"><use href="#store"/></svg></span>
      <span class="app-slot run"><svg class="ti"><use href="#gred"/></svg></span>
      <span class="app-slot run active"><svg class="ti"><use href="#viewer"/></svg></span>
      <span class="app-slot run"><svg class="ti"><use href="#gld"/></svg></span>
      <span class="app-slot run"><svg class="ti"><use href="#gblue"/></svg></span>
      <span class="app-slot run"><svg class="ti"><use href="#gcircle"/></svg></span>
      <span class="app-slot run"><svg class="ti"><use href="#note"/></svg></span>
    </div>
    <div class="tray">
      <div class="cpu"><span>6%</span><span>CPU使用</span></div>
      <span></span>
      <svg class="tr" viewBox="0 0 16 16"><path d="M2 10l6-6 6 6" fill="none" stroke="#fff" stroke-width="1.200"/></svg>
      <svg class="tr" viewBox="0 0 16 16"><rect x="3" y="5" width="12" height="8" fill="#fff" stroke="#fff"/><path d="M0 4h4M2 2v4" stroke="#fff"/></svg>
      <svg class="tr" viewBox="0 0 16 16"><path d="M2 14a12 12 0 0 1 12-12M5 14a9 9 0 0 1 9-9M8 14a6 6 0 0 1 6-6M11 14a3 3 0 0 1 3-3" fill="none" stroke="#ccc"/></svg>
      <svg class="tr" viewBox="0 0 16 16"><path d="M1 6h3l4-4v12l-4-4H1z" fill="none" stroke="#fff"/><path d="M10 6l4 4M14 6l-4 4" stroke="#fff"/></svg>
      <span class="ime">中</span>
      <svg class="tr big"><use href="#sogou"/></svg>
      <div class="clock"><span>15:16</span><span>2017/1/22</span></div>
      <svg class="tr big" viewBox="0 0 20 20"><path d="M2 2h16v13h-5l-3 3-3-3H2z" fill="none" stroke="#fff" stroke-width="1.300"/></svg>
    </div>
  </footer>

  <!-- dialog window lying over the CAD canvas -->
  <section class="dialog">
    <div class="dlg-title"><span>参数设置</span><svg class="dlg-x" viewBox="0 0 12 12"><path d="M1 1l10 10M11 1L1 11" stroke="#222" stroke-width="1.200"/></svg></div>
    <div class="dlg-body">
      <div class="dlg-main">
        <div class="table-frame">
          <div class="grid-table">
            <div class="th corner"></div><div class="th cur">设置条件</div><div class="th">加筋形式</div>
            <div class="rh cur">1</div><div class="td sel"><u>L</u>型遇框架柱</div><div class="td"><u>L-1</u>形</div>
            <div class="rh">2</div><div class="td"><u>L</u>型遇构造柱</div><div class="td"><u>L-3</u>形</div>
            <div class="rh">3</div><div class="td"><u>T</u>型遇框架柱</div><div class="td"><u>T-1</u>形</div>
            <div class="rh">4</div><div class="td"><u>T</u>型遇构造柱</div><div class="td"><u>T-3</u>形</div>
            <div class="rh">5</div><div class="td">十字型遇框架柱</div><div class="td">十字<u>-1</u>形</div>
            <div class="rh">6</div><div class="td">十字型遇构造柱</div><div class="td">十字<u>-4</u>形</div>
            <div class="rh">7</div><div class="td">一字型遇框架柱</div><div class="td">一字<u>-6</u>形</div>
            <div class="rh">8</div><div class="td">一字型遇构造柱</div><div class="td">一字<u>-3</u>形</div>
            <div class="rh">9</div><div class="td">孤墙端部遇柱</div><div class="td">一字<u>-4</u>形</div>
          </div>
        </div>
        <div class="node-group">
          <div class="legend"><span>节点示意图</span></div>
          <svg class="schem" viewBox="0 0 240 225" xmlns="http://www.w3.org/2000/svg">
            <path d="M105 25h21M166 25h29M105 20v10M195 20v10" stroke="#ddd" fill="none"/>
            <text class="s-dim" x="146" y="31">1000</text>
            <path d="M51 202V42H211M211 32V100" stroke="#aaa" fill="none"/>
            <path d="M26 202H114M211 54l10 3-20 5 10 2" stroke="#ccc" fill="none"/>
            <path d="M105 20V202M51 89.500H211M129 82V97" stroke="#fff" fill="none"/>
            <path d="M60 50H194V81H61M56 54V181H95V54" stroke="#2fe0e6" stroke-width="2" fill="none"/>
            <path d="M95 144h21" stroke="#ccc"/>
            <path d="M27 90v27M27 155v27M23 90H39M23 182H39" stroke="#ccc" fill="none"/>
            <text class="s-red" transform="translate(33 135) rotate(-90)">1000</text>
            <text class="s-green" x="119" y="117">A6@500</text>
            <text class="s-green" x="119" y="154">A6@500</text>
            <path d="M71 198l3 6 3-8 3 9" stroke="#ddd" fill="none"/>
            <text class="s-name" x="129" y="202">L-1形</text>
          </svg>
        </div>
      </div>
      <p class="dlg-note">说明：加筋形式允许为空，此时在满足该设置条件时将不生成砌体加筋。</p>
      <div class="dlg-foot">
        <label class="chk"><i class="box"></i>整楼生成</label>
        <span class="btn primary">确定</span>
        <span class="btn">取消</span>
      </div>
    </div>
  </section>

  <!-- floating items on top of the screenshot -->
  <div class="badge b72">72</div>
  <div class="badge-clip"><div class="badge b71">71</div></div>

  <div class="poi"><span>Poi...</span><i></i></div>
  <div class="start-btn">开始</div>

  <svg class="nav-circle prev" viewBox="0 0 76 76"><circle cx="38" cy="38" r="35" fill="rgba(235,235,235,.18)" stroke="rgba(200,200,200,.4)" stroke-width="4"/><path d="M52 38H22M33 24L19 38l14 14" fill="none" stroke="rgba(235,235,235,.75)" stroke-width="9" stroke-linecap="round" stroke-linejoin="round"/></svg>
  <svg class="nav-circle next" viewBox="0 0 76 76"><circle cx="38" cy="38" r="35" fill="rgba(60,60,60,.2)" stroke="#8e8e8e" stroke-width="4"/><path d="M20 38H56M42 21l17 17-17 17" fill="none" stroke="#9a9a9a" stroke-width="10" stroke-linecap="round" stroke-linejoin="round"/></svg>

  <svg class="marks" viewBox="0 0 1366 768" xmlns="http://www.w3.org/2000/svg">
    <rect x="463" y="160" width="156" height="62" fill="none" stroke="#f00" stroke-width="4"/>
    <path d="M458 162l10-6v14z" fill="#f00"/>
    <rect x="643.500" y="535" width="120" height="70" fill="none" stroke="#f00" stroke-width="7"/>
    <path d="M421 398L558 237" stroke="#f00" stroke-width="2.500"/>
    <path d="M565 229l-14 6 9 9z" fill="#f00"/>
    <text class="mark-text" x="369" y="420">点开，</text>
  </svg>
</div>
</body>
</html>
```

FILE: styles.css
```css
* { box-sizing: border-box; }
html, body { margin: 0; padding: 0; }
body {
  width: 1366px; height: 768px; overflow: hidden;
  font: 12px/16px "Noto Sans CJK SC", "Liberation Sans", sans-serif;
  color: #333;
}
.sprite { display: none; }
.screen { position: relative; width: 1366px; height: 768px; display: flex; flex-direction: column; background: #fff; overflow: hidden; }
i { font-style: normal; display: block; }
u { text-decoration: none; }

/* viewer bar */
.viewer-bar { height: 29px; flex: none; background: #4a7cd4; display: flex; align-items: center; padding-left: 9px; color: #fff; }
.viewer-logo { width: 15px; height: 17px; flex: none; }
.viewer-name { margin-left: 4px; font-size: 12px; white-space: nowrap; }
.viewer-ctrls { margin-left: auto; display: flex; align-items: center; gap: 16px; padding-right: 14px; }
.vc { width: 14px; height: 14px; }
.vc-drop { width: 0; height: 0; border: 5px solid transparent; border-top: 6px solid #fff; border-bottom: 0; margin-right: 3px; }
.viewer-strip { height: 5px; flex: none; background: linear-gradient(#e4e4e4, #c8c8c8); }

/* application window */
.app { margin: 0 5px 0 3px; height: 689px; flex: none; display: flex; flex-direction: column; background: #f1f1f1; box-shadow: 0 1px 4px rgba(0,0,0,.55); }
.app-title { height: 20px; flex: none; background: #fff; display: flex; align-items: center; padding-left: 3px; }
.app-logo { width: 15px; height: 15px; flex: none; }
.app-name { margin-left: 6px; color: #868686; font-size: 12.500px; white-space: nowrap; }
.app-ctrls { margin-left: auto; display: flex; gap: 34px; padding-right: 17px; }
.ac { width: 12px; height: 12px; }

.menu { height: 30px; flex: none; display: flex; align-items: center; gap: 10px; padding-left: 7px; background: #f4f4f4; white-space: nowrap; color: #333; }
.m2 { margin-left: 2px; }
.menu-ver { margin-left: -2px; margin-right: -2px; }
.menu .it { gap: 3px; }
.menu .gxe { margin-left: -6px; }
.menu-ask { flex: none; width: 190px; height: 30px; line-height: 30px; padding-left: 30px; margin: 0 -4px; background: #f9f9f9; color: #557a2a; }
.cost { margin-left: -3px; }
.more { font: bold 13px/14px "Liberation Sans", sans-serif; color: #222; width: 10px; margin-top: -6px; flex: none; }
.more-menu { margin-left: 28px; }

.tb { display: flex; align-items: center; gap: 6px; white-space: nowrap; flex: none; }
.seg { display: flex; align-items: center; gap: 6px; }
.ic { width: 16px; height: 16px; flex: none; }
.it { display: inline-flex; align-items: center; gap: 4px; }
.off { color: #9c9c9c; }
.off2 { color: #555; }
.pair { display: inline-flex; align-items: center; gap: 5px; }
.sep { width: 1px; height: 18px; background: #c4c4c4; flex: none; }
.dd { width: 0; height: 0; flex: none; border: 3px solid transparent; border-top: 4px solid #222; border-bottom: 0; }
.dd.soft { border-top-color: #999; }
.dd.tight { margin-left: -5px; }
.grip { width: 2px; height: 15px; flex: none; background: repeating-linear-gradient(#9a9a9a 0 2px, transparent 2px 4px); }
.sigma { width: 16px; text-align: center; font: bold 14px/16px "Liberation Sans", sans-serif; color: #222; }

.tb1 { height: 28px; padding-left: 6px; background: #f6f6f6; }
.more-a { margin: -6px -2px 0 16px; }
.seg-a { width: 676px; }
.seg-b { margin-left: -3px; }
.seg-b .it { gap: 3px; }
.seg-b .sep { margin-left: 2px; }
.seg-b .sep-a { margin-left: 0; }
.orbit-it { margin-left: 3px; }
.local-it { margin-left: 4px; }
.zoom-it { margin-left: 1px; }
.pan-it { margin-left: 2px; }
.hot { background: #fff; height: 28px; padding: 0 3px 0 2px; margin-right: -2px; gap: 4px; }
.hot .dd { margin-left: 6px; }
.more-end { margin-left: 24px; }

.workspace { flex: 1; min-height: 0; display: flex; overflow: hidden; }

/* left navigation */
.nav { width: 200px; flex: none; padding: 3px 2px 0 1px; display: flex; flex-direction: column; background: #f3f3f3; overflow: hidden; }
.nav-head { height: 14px; flex: none; display: flex; align-items: center; background: #f4f4f4; border: 1px solid #bbb; border-width: 1px 1px 1px 0; line-height: 12px; color: #222; margin-bottom: 1px; }
.nav-pin { margin-left: auto; width: 12px; height: 12px; }
.nav-x { width: 12px; height: 12px; margin: 0 4px 0 6px; }
.nav-btn { height: 23px; flex: none; margin-left: 1px; border: 1px solid #b4b4b4; border-top-color: #ccc; background: linear-gradient(#f7f7f7, #e9e9e9); text-align: center; line-height: 21px; color: #333; font-size: 12.500px; }
.nav-tools { height: 26px; flex: none; background: #fafafa; display: flex; align-items: center; padding: 0 0 4px 6px; gap: 14px; }
.plus { font: bold 16px/16px "Liberation Sans", sans-serif; color: #123; }
.minus { font-size: 11px; line-height: 10px; color: #333; align-self: flex-start; margin-top: 1px; }
.tree-box { height: 485px; flex: none; margin: 0 1px 0 3px; border: 1px solid #a8a8a8; display: flex; background: #fff; }
.tree { flex: 1; min-width: 0; padding-top: 1px; overflow: hidden; }
.node { position: relative; height: 15.920px; display: flex; align-items: center; padding-left: 6px; gap: 5px; white-space: nowrap; color: #3a3a3a; line-height: 16px; }
.chv { width: 8px; height: 8px; margin-right: 2px; flex: none; }
.node u { font: 12px/16px "Liberation Mono", monospace; letter-spacing: -1.200px; }
.kids { position: relative; }
.kids::before { content: ""; position: absolute; left: 11px; top: -5px; bottom: 8px; border-left: 1px dotted #888; }
.kid { padding-left: 41px; }
.kid::before { content: ""; position: absolute; left: 30px; top: 8px; width: 11px; border-top: 1px dotted #888; }
.kid::after { content: ""; position: absolute; left: 30px; top: -8px; height: 16px; border-left: 1px dotted #888; }
.sel > span { background: #dedede; padding: 0 3px 0 2px; margin-left: -2px; height: 16px; }
.clip-row { padding-left: 20px; position: relative; top: 1px; }
.new { font: bold 10px/10px "Liberation Sans", sans-serif; color: #333; background: #f8e64a; padding: 0 3px; }
.vscroll { width: 15px; flex: none; margin-right: 2px; display: flex; flex-direction: column; background: #f0f0f0; }
.vs-btn { height: 18px; flex: none; text-align: center; font: bold 13px/20px "DejaVu Sans", sans-serif; color: #444; }
.vs-btn.down { line-height: 10px; }
.vs-thumb { height: 432px; flex: none; background: #cdcdcd; }
.vs-track { flex: 1; }

/* work area */
.work { flex: 1; min-width: 0; margin-left: 1px; display: flex; flex-direction: column; }
.tb2 { height: 29px; padding-left: 3px; background: #f1f1f1; }
.tb3 { height: 27px; padding-left: 3px; gap: 6px; }
.tb3 > .grip { margin-right: -4px; }
.combo { width: 72px; height: 22px; display: flex; align-items: center; padding: 0 3px; background: #f7f7f7; margin-right: -6px; }
.combo .dd { margin-left: auto; }
.c1 { width: 59px; padding-left: 4px; margin-right: -5px; }
.tb3 > .sep { margin-left: 2px; }
.axis-group { display: flex; align-items: center; height: 24px; background: #f8f8f8; gap: 6px; padding: 0 3px; margin-left: 72px; }
.axis-group .it { gap: 5px; }
.axis-group .dd { margin-left: -1px; }
.tb4 { height: 28px; padding-left: 3px; }
.on { border: 1px solid #4f9bd0; background: #e2eff9; }
.sep-tight { margin-left: -4px; }
.auto-btn { height: 22px; padding: 0 2px; margin-left: -4px; gap: 4px; color: #222; }
.canvas { height: 508px; flex: none; background: #000; overflow: hidden; }
.cad { display: block; width: 1158px; height: 508px; }
.cad-label text { font: bold 14px "Liberation Sans", sans-serif; fill: #aaa; text-anchor: middle; }
.axis-y { font: 14px "Liberation Sans", sans-serif; fill: #1f7a2f; }
.axis-x { font: 14px "Liberation Sans", sans-serif; fill: #8a1520; }
.page-no { font: 14px "Liberation Sans", sans-serif; fill: #8a8a8a; text-anchor: middle; }
.status { height: 19px; padding-left: 3px; align-items: flex-start; overflow: hidden; gap: 5px; background: #efefef; }
.status .it, .status .grip { margin-top: 6px; }
.status .on { height: 24px; margin-top: 2px; }
.st-a { width: 74px; padding-left: 1px; gap: 2px; margin-right: -5px; justify-content: center; }
.grip-st { margin-left: 43px; }
.st-b { width: 51px; padding-left: 2px; margin-right: -5px; gap: 1px; justify-content: center; }
.st-last { background: #f9f9f9; padding-right: 6px; height: 24px; margin-left: 1px; }

/* gap under the viewer's image */
.viewer-gap { height: 5px; flex: none; background: #f2f2f2; }

/* task bar */
.taskbar { flex: 1; min-height: 0; background: #000; display: flex; color: #fff; }
.start { width: 48px; flex: none; display: flex; align-items: center; justify-content: center; }
.win { width: 16px; height: 16px; margin-top: -4px; }
.search { width: 344px; height: 40px; flex: none; background: #3a3a3a; display: flex; align-items: center; padding-left: 10px; color: #a8a8a8; font-size: 14px; }
.ring { width: 20px; height: 20px; border: 2px solid #ddd; border-radius: 50%; flex: none; }
.search-text { margin-left: 6px; }
.mic { width: 13px; height: 18px; margin-left: auto; margin-right: 14px; }
.apps { display: flex; margin-left: 1.500px; }
.app-slot { width: 49px; height: 40px; display: flex; align-items: center; justify-content: center; position: relative; }
.shift { margin-left: 4px; }
.ti { width: 24px; height: 24px; margin-top: -2px; }
.run::after { content: ""; position: absolute; left: 4px; right: 4px; bottom: 0; height: 2px; background: #76b9ed; }
.active { background: #3d3d3d; }
.active::after { left: 0; right: 0; }
.tray { margin-left: auto; display: grid; grid-template-columns: 48px 14px 24px 25px 24px 22px 25px 32px 78px 32px 18px; align-items: center; justify-items: center; height: 40px; }
.cpu { display: flex; flex-direction: column; align-items: center; font-size: 12px; line-height: 16px; }
.tr { width: 16px; height: 16px; }
.tr.big { width: 20px; height: 20px; }
.ime { font-size: 14px; font-weight: 700; }
.clock { display: flex; flex-direction: column; align-items: center; gap: 4px; font-size: 12px; line-height: 15px; }

/* dialog */
.dialog { position: absolute; left: 660px; top: 243px; width: 503px; height: 337px; border: 1px solid #4ea3e0; background: #f0f0f0; display: flex; flex-direction: column; }
.dlg-title { height: 25px; flex: none; background: #fff; display: flex; align-items: center; padding: 0 9px 3px 4px; justify-content: space-between; color: #333; }
.dlg-x { width: 12px; height: 12px; }
.dlg-body { flex: 1; min-height: 0; display: flex; flex-direction: column; }
.dlg-main { display: flex; gap: 7px; height: 240px; flex: none; }
.table-frame { width: 246px; height: 241px; background: #fff; border: 1px solid #b4b4b4; padding: 1px 0 0 1px; flex: none; }
.grid-table { display: grid; grid-template-columns: 20px 109px 110px; grid-template-rows: 19px repeat(9, 18.900px); }
.th { background: linear-gradient(#fafafa, #e8e8e8); text-align: center; line-height: 19px; border-right: 1px solid #c6c6c6; border-bottom: 1px solid #c6c6c6; color: #333; }
.th.cur { background: linear-gradient(#fbd78e, #efbb5f); color: #a34a1a; }
.rh { background: #f5f5f5; text-align: center; line-height: 18px; border-right: 1px solid #c6c6c6; border-bottom: 1px solid #c6c6c6; font: 11px/18px "Liberation Mono", monospace; }
.rh.cur { background: linear-gradient(#fbd78e, #f3c878); color: #a34a1a; }
.td { padding-left: 2px; line-height: 18px; border-right: 1px solid #c6c6c6; border-bottom: 1px solid #c6c6c6; white-space: nowrap; color: #3a3a3a; }
.td u { font: 12px/18px "Liberation Mono", monospace; letter-spacing: -1.200px; }
.td.sel { background: #dcebf8; }
.node-group { width: 246px; flex: none; padding-left: 2px; display: flex; flex-direction: column; position: relative; }
.legend { height: 14px; flex: none; border-bottom: 1px solid #dcdcdc; line-height: 12px; color: #444; position: relative; }
.legend span { padding-left: 3px; background: #f0f0f0; padding-right: 1px; }
.schem { display: block; width: 240px; height: 225px; background: #000; flex: none; }
.s-dim { font: 20px "Liberation Serif", serif; fill: #ddd; text-anchor: middle; }
.s-red { font: 18px "Liberation Serif", serif; fill: #c01020; text-anchor: middle; }
.s-green { font: 17px "Liberation Serif", serif; fill: #10c020; }
.s-name { font: 29px "Liberation Serif", "Noto Sans CJK SC", serif; fill: #bbb; }
.dlg-note { margin: 0; padding: 12px 0 0 8px; height: 32px; flex: none; line-height: 16px; color: #444; white-space: nowrap; font-size: 12.500px; }
.dlg-foot { display: flex; align-items: center; padding: 6px 13px 0 8px; height: 29px; }
.chk { display: flex; align-items: center; gap: 2px; margin-top: 8px; color: #222; }
.box { width: 13px; height: 13px; background: #fff; border: 1px solid #333; }
.btn { width: 71px; height: 23px; background: #e1e1e1; border: 1px solid #adadad; text-align: center; line-height: 21px; margin-left: 15px; color: #333; }
.btn.primary { margin-left: auto; border: 2px solid #2a78c0; line-height: 19px; }

/* floating badges */
.badge { position: absolute; border-radius: 50%; background: #3cc35a; border: 2px solid #d8e4d8; box-shadow: 0 2px 5px rgba(0,0,0,.5); color: #fff; font: bold 12px/14px "Liberation Sans", sans-serif; text-align: center; }
.b72 { left: 1124px; top: -28px; width: 46px; height: 46px; padding-top: 28px; }
.badge-clip { position: absolute; left: 1110px; top: 34px; width: 70px; height: 24px; overflow: hidden; }
.b71 { left: 12px; top: -29px; width: 44px; height: 44px; padding-top: 26px; }

.poi { position: absolute; left: 19px; top: 187px; width: 52px; height: 25px; background: rgba(255,255,255,.9); display: flex; padding: 2px 1px 0 3px; justify-content: space-between; color: #aaa; font: 13px/18px "Liberation Sans", sans-serif; box-shadow: 0 0 2px #ddd; }
.poi i { width: 18px; height: 17px; background: #e4e4e4; }
.start-btn { position: absolute; left: 19px; top: 212px; width: 51px; height: 22px; background: #f0f0f0; border: 1px solid #888; box-shadow: 1px 1px 2px #555, inset 0 0 0 1px #fff; text-align: center; line-height: 20px; color: #222; }

.nav-circle { position: absolute; width: 76px; height: 76px; }
.prev { left: 16px; top: 342px; }
.next { left: 1270px; top: 341px; }

.marks { position: absolute; left: 0; top: 0; width: 1366px; height: 768px; pointer-events: none; }
.mark-text { font: 18px "Noto Sans CJK SC", sans-serif; fill: #f00; }
```
